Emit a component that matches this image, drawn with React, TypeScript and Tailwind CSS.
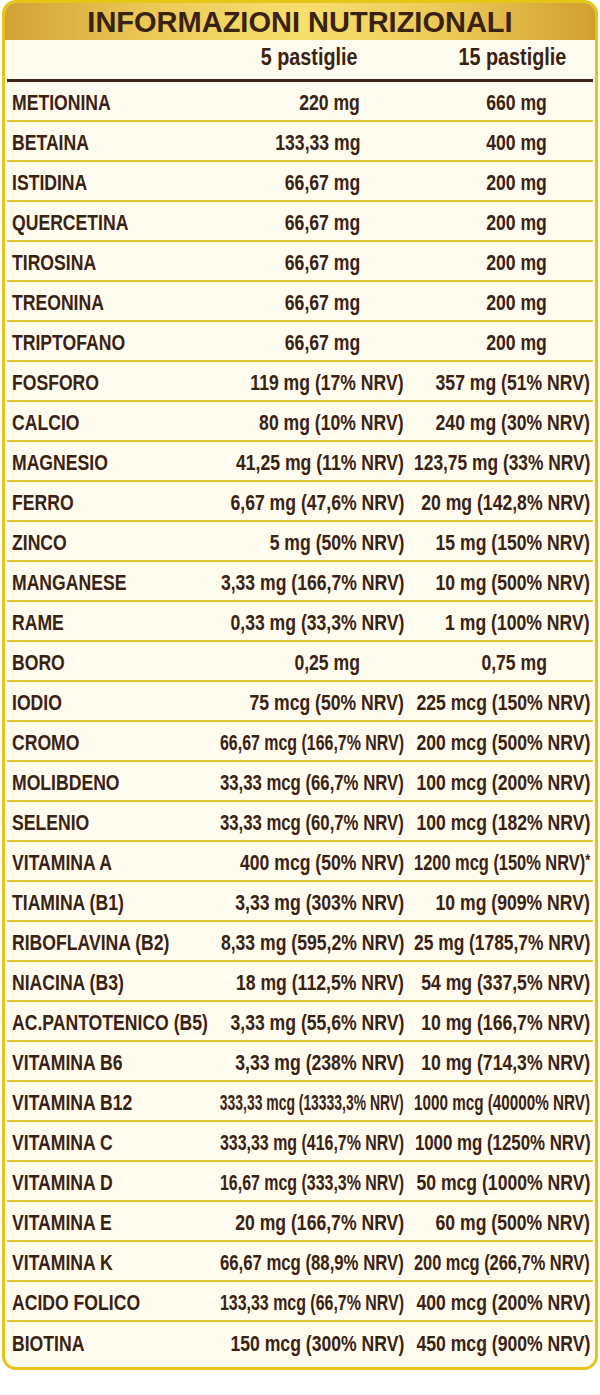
import { useLayoutEffect, useRef, useState } from "react";

type Row = {
  name: string;
  a: string;
  b: string;
  plain?: boolean;
  star?: boolean;
};

const rows: Row[] = [
  { name: "METIONINA", a: "220 mg", b: "660 mg", plain: true },
  { name: "BETAINA", a: "133,33 mg", b: "400 mg", plain: true },
  { name: "ISTIDINA", a: "66,67 mg", b: "200 mg", plain: true },
  { name: "QUERCETINA", a: "66,67 mg", b: "200 mg", plain: true },
  { name: "TIROSINA", a: "66,67 mg", b: "200 mg", plain: true },
  { name: "TREONINA", a: "66,67 mg", b: "200 mg", plain: true },
  { name: "TRIPTOFANO", a: "66,67 mg", b: "200 mg", plain: true },
  { name: "FOSFORO", a: "119 mg (17% NRV)", b: "357 mg (51% NRV)" },
  { name: "CALCIO", a: "80 mg (10% NRV)", b: "240 mg (30% NRV)" },
  { name: "MAGNESIO", a: "41,25 mg (11% NRV)", b: "123,75 mg (33% NRV)" },
  { name: "FERRO", a: "6,67 mg (47,6% NRV)", b: "20 mg (142,8% NRV)" },
  { name: "ZINCO", a: "5 mg (50% NRV)", b: "15 mg (150% NRV)" },
  { name: "MANGANESE", a: "3,33 mg (166,7% NRV)", b: "10 mg (500% NRV)" },
  { name: "RAME", a: "0,33 mg (33,3% NRV)", b: "1 mg (100% NRV)" },
  { name: "BORO", a: "0,25 mg", b: "0,75 mg", plain: true },
  { name: "IODIO", a: "75 mcg (50% NRV)", b: "225 mcg (150% NRV)" },
  { name: "CROMO", a: "66,67 mcg (166,7% NRV)", b: "200 mcg (500% NRV)" },
  { name: "MOLIBDENO", a: "33,33 mcg (66,7% NRV)", b: "100 mcg (200% NRV)" },
  { name: "SELENIO", a: "33,33 mcg (60,7% NRV)", b: "100 mcg (182% NRV)" },
  { name: "VITAMINA A", a: "400 mcg (50% NRV)", b: "1200 mcg (150% NRV)", star: true },
  { name: "TIAMINA (B1)", a: "3,33 mg (303% NRV)", b: "10 mg (909% NRV)" },
  { name: "RIBOFLAVINA (B2)", a: "8,33 mg (595,2% NRV)", b: "25 mg (1785,7% NRV)" },
  { name: "NIACINA (B3)", a: "18 mg (112,5% NRV)", b: "54 mg (337,5% NRV)" },
  { name: "AC.PANTOTENICO (B5)", a: "3,33 mg (55,6% NRV)", b: "10 mg (166,7% NRV)" },
  { name: "VITAMINA B6", a: "3,33 mg (238% NRV)", b: "10 mg (714,3% NRV)" },
  { name: "VITAMINA B12", a: "333,33 mcg (13333,3% NRV)", b: "1000 mcg (40000% NRV)" },
  { name: "VITAMINA C", a: "333,33 mg (416,7% NRV)", b: "1000 mg (1250% NRV)" },
  { name: "VITAMINA D", a: "16,67 mcg (333,3% NRV)", b: "50 mcg (1000% NRV)" },
  { name: "VITAMINA E", a: "20 mg (166,7% NRV)", b: "60 mg (500% NRV)" },
  { name: "VITAMINA K", a: "66,67 mcg (88,9% NRV)", b: "200 mcg (266,7% NRV)" },
  { name: "ACIDO FOLICO", a: "133,33 mcg (66,7% NRV)", b: "400 mcg (200% NRV)" },
  { name: "BIOTINA", a: "150 mcg (300% NRV)", b: "450 mcg (900% NRV)" },
];

// the type is condensed: Liberation Sans narrowed by 0.8, squeezed further
// when a value is wider than its column
const NARROW = 0.8;

function Fit({ max, children }: { max: number; children: React.ReactNode }) {
  const ref = useRef<HTMLSpanElement>(null);
  const [scale, setScale] = useState(NARROW);

  useLayoutEffect(() => {
    const w = ref.current?.offsetWidth ?? 0;
    setScale(w * NARROW > max ? max / w : NARROW);
  }, [max]);

  return (
    <span
      ref={ref}
      className="inline-block shrink-0 whitespace-nowrap origin-right"
      style={{ transform: `scaleX(${scale})` }}
    >
      {children}
    </span>
  );
}

export default function App() {
  return (
    <div className="w-[600px] min-h-[1395px] bg-white font-['Liberation_Sans',Arial,sans-serif]">
      <div className="mx-[2px] border-[3px] border-[#e5c519] rounded-[14px] overflow-hidden bg-[#fffbee] pb-[5px] text-[#3a2213]">
        <div className="h-[37px] flex items-center justify-center bg-[linear-gradient(90deg,#d3a236_0%,#ecc957_25%,#f8de6c_50%,#ecc957_75%,#d19f30_100%)]">
          <h1 className="font-bold text-[29px] leading-none pt-[2px]">
            INFORMAZIONI NUTRIZIONALI
          </h1>
        </div>

        <div className="mx-[2px] h-[39px] grid grid-cols-[208px_189px_minmax(0,1fr)] items-center pb-[5px] font-bold text-[23px] leading-none">
          <div />
          <div className="flex justify-end pr-[47px]">
            <span className="inline-block origin-right scale-x-[0.86] whitespace-nowrap">5 pastiglie</span>
          </div>
          <div className="flex justify-end pr-[27px]">
            <span className="inline-block origin-right scale-x-[0.86] whitespace-nowrap">15 pastiglie</span>
          </div>
        </div>
        <div className="mx-[2px] h-[3px] bg-[#3d2414]" />

        <div className="font-bold text-[22px] leading-none">
          {rows.map((r, i) => (
            <div
              key={r.name}
              className={`mx-[2px] h-[40px] grid grid-cols-[208px_189px_minmax(0,1fr)] items-center pt-[4px] ${
                i < rows.length - 1 ? "border-b-2 border-[#dec52e]" : ""
              }`}
            >
              <div className="pl-[5px] min-w-0">
                <span className="inline-block origin-left scale-x-[0.8] whitespace-nowrap">{r.name}</span>
              </div>
              <div className={`flex justify-end min-w-0 ${r.plain ? "pr-[44px]" : ""}`}>
                <Fit max={184}>{r.a}</Fit>
              </div>
              <div className={`flex justify-end min-w-0 ${r.plain ? "pr-[46px]" : "pr-[3px]"}`}>
                <Fit max={176}>
                  {r.b}
                  {r.star && <span className="text-[17px] align-top">*</span>}
                </Fit>
              </div>
            </div>
          ))}
        </div>
      </div>
    </div>
  );
}
